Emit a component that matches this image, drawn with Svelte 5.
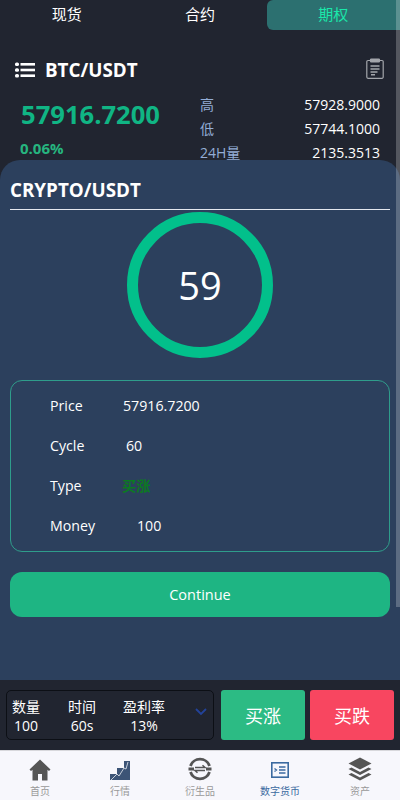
<script>
  const tabs = ['现货', '合约', '期权']
  const stats = [
    ['高', '57928.9000'],
    ['低', '57744.1000'],
    ['24H量', '2135.3513']
  ]
  const orderRows = [
    { label: 'Price', value: '57916.7200', indent: 73 },
    { label: 'Cycle', value: '60', indent: 76 },
    { label: 'Type', value: '买涨', indent: 72, green: true },
    { label: 'Money', value: '100', indent: 87 }
  ]
  const summary = [
    ['数量', '100'],
    ['时间', '60s'],
    ['盈利率', '13%']
  ]
</script>

<div class="page">
  <div class="tabs">
    {#each tabs as tab, i}
      <div class="tab" class:active={i === 2}>{tab}</div>
    {/each}
  </div>

  <div class="pair-row">
    <div class="pair">
      <svg class="list-icon" width="20" height="16" viewBox="0 0 20 16" fill="#fff">
        <rect x="0" y="0.5" width="4" height="3.6" rx="1.6" />
        <rect x="0" y="6.2" width="4" height="3.6" rx="1.6" />
        <rect x="0" y="11.9" width="4" height="3.6" rx="1.6" />
        <rect x="5.5" y="1" width="14.5" height="2.6" />
        <rect x="5.5" y="6.7" width="14.5" height="2.6" />
        <rect x="5.5" y="12.4" width="14.5" height="2.6" />
      </svg>
      <span>BTC/USDT</span>
    </div>
    <svg class="clip-icon" width="18" height="21" viewBox="0 0 18 21" fill="none" stroke="#a3a6ab" stroke-width="1.2">
      <path d="M4.5 2.5H2a1.2 1.2 0 0 0-1.2 1.2v15.4A1.2 1.2 0 0 0 2 20.3h14a1.2 1.2 0 0 0 1.2-1.2V3.7A1.2 1.2 0 0 0 16 2.5h-2.5" />
      <rect x="4.5" y="1" width="9" height="3" rx="0.8" fill="#a3a6ab" />
      <path d="M4.5 8h9M4.5 11h9M4.5 14h7M5 16.8h4" stroke-width="1.4" />
    </svg>
  </div>

  <div class="market">
    <div class="price-col">
      <div class="price">57916.7200</div>
      <div class="change">0.06%</div>
    </div>
    <div class="stats">
      {#each stats as [label, value]}
        <div class="stat"><span class="stat-label">{label}</span><span>{value}</span></div>
      {/each}
    </div>
  </div>

  <div class="sheet">
    <div class="sheet-title">CRYPTO/USDT</div>
    <div class="ring"><span>59</span></div>
    <div class="order-box">
      {#each orderRows as row}
        <div class="order-row">
          <span class="order-label" style="width: {row.indent}px">{row.label}</span>
          <span class:type-green={row.green}>{row.value}</span>
        </div>
      {/each}
    </div>
    <button class="continue">Continue</button>
  </div>

  <div class="trade-bar">
    <div class="summary">
      {#each summary as [label, value]}
        <div class="summary-item"><div>{label}</div><div>{value}</div></div>
      {/each}
      <svg class="chev" width="12" height="8" viewBox="0 0 12 8" fill="none" stroke="#23439a" stroke-width="1.8">
        <path d="M1 1l5 5 5-5" />
      </svg>
    </div>
    <button class="trade up">买涨</button>
    <button class="trade down">买跌</button>
  </div>

  <nav class="bottom-nav">
    <div class="nav-item">
      <svg width="22" height="22" viewBox="0 0 22 22" fill="#555">
        <path d="M11 0.5L0.5 10.5 2 12l1.5-1.2V21.5H9V15h4v6.5h5.500V10.800L20 12l1.500-1.500z" />
      </svg>
      <span>首页</span>
    </div>
    <div class="nav-item">
      <svg width="20" height="21" viewBox="0 0 20 21">
        <path d="M0 20v-6h7V8h7V1h6v19z" fill="#3c5476" />
        <path d="M1 20l6-6 2 2 5-8 2 1 2-7" fill="none" stroke="#e8ecf2" stroke-width="0.8" />
      </svg>
      <span>行情</span>
    </div>
    <div class="nav-item">
      <svg width="24" height="24" viewBox="0 0 24 24" fill="none" stroke="#555">
        <path d="M2.500 9a10 10 0 0 1 19 0M2.500 15a10 10 0 0 0 19 0" stroke-width="2.800" />
        <path d="M0.500 12h5.500M18 12h5.500" stroke-width="2.800" />
        <path d="M7 10.500h10l-2.500-2.200M17 13.500H7l2.500 2.200" stroke-width="1.500" />
      </svg>
      <span>衍生品</span>
    </div>
    <div class="nav-item current">
      <svg width="18" height="16" viewBox="0 0 18 16" fill="none" stroke="#3b6aa0">
        <rect x="0.800" y="0.800" width="16.400" height="14.400" stroke-width="1.600" />
        <path d="M8 5h6.500M8 8h6.500M8 11h6.500M3.500 6.500L5.500 8l-2 1.500" stroke-width="1.300" />
      </svg>
      <span>数字货币</span>
    </div>
    <div class="nav-item">
      <svg width="24" height="24" viewBox="0 0 24 24" fill="#555">
        <path d="M12 0.500L0.500 6.500 12 12.500l11.500-6z" />
        <path d="M0.500 12l3-1.500L12 15l8.500-4.500 3 1.500L12 18z" />
        <path d="M0.500 17.500l3-1.500L12 20.500l8.500-4.500 3 1.500L12 23.500z" />
      </svg>
      <span>资产</span>
    </div>
  </nav>

  <div class="scrollbar"></div>
</div>

<style>
  :global(body) {
    margin: 0;
    background: #212530;
  }

  .page {
    position: relative;
    width: 400px;
    height: 800px;
    overflow: hidden;
    background: #212530;
    color: #fff;
    font-family: 'Open Sans', 'Noto Sans CJK SC', sans-serif;
    display: flex;
    flex-direction: column;
  }

  .tabs {
    display: flex;
    height: 30px;
    flex-shrink: 0;
  }

  .tab {
    flex: 1;
    text-align: center;
    font-size: 15px;
    line-height: 29px;
  }

  .tab.active {
    background: #2c7070;
    color: #1ae8aa;
    border-radius: 6px 0 0 6px;
  }

  .pair-row {
    display: flex;
    align-items: center;
    justify-content: space-between;
    padding: 25px 16px 0 15px;
    height: 30px;
    flex-shrink: 0;
  }

  .clip-icon {
    margin-top: -4px;
  }

  .pair {
    display: flex;
    align-items: center;
    gap: 10px;
    font-size: 18.8px;
    font-weight: 700;
  }

  .market {
    display: flex;
    height: 75px;
    flex-shrink: 0;
    padding-top: 8px;
  }

  .price-col {
    width: 200px;
    padding-left: 20px;
    box-sizing: border-box;
  }

  .price {
    color: #10b584;
    font-size: 25.6px;
    font-weight: 700;
    line-height: 32px;
    margin: 6px 0 0 1px;
  }

  .change {
    color: #26b57f;
    font-size: 15px;
    font-weight: 700;
    line-height: 20px;
    margin-top: 7px;
  }

  .stats {
    width: 180px;
  }

  .stat {
    display: flex;
    justify-content: space-between;
    font-size: 14px;
    line-height: 24px;
  }

  .stat-label {
    color: #93add6;
  }

  .sheet {
    position: absolute;
    left: 0;
    top: 160px;
    width: 400px;
    height: 520px;
    box-sizing: border-box;
    padding: 0 10px;
    background: #2c405d;
    border-radius: 20px 20px 0 0;
    display: flex;
    flex-direction: column;
  }

  .sheet-title {
    height: 49px;
    line-height: 61px;
    font-size: 18.8px;
    font-weight: 700;
    border-bottom: 1px solid #e4e8ee;
    flex-shrink: 0;
  }

  .ring {
    width: 146px;
    height: 146px;
    box-sizing: border-box;
    border: 11px solid #02c08b;
    border-radius: 50%;
    margin: 2px auto 0;
    display: flex;
    align-items: center;
    justify-content: center;
    font-size: 38px;
    flex-shrink: 0;
  }

  .order-box {
    margin-top: 22px;
    height: 172px;
    box-sizing: border-box;
    border: 1px solid #2f9d8b;
    border-radius: 12px;
    padding: 5px 0 0 39px;
    flex-shrink: 0;
  }

  .order-row {
    display: flex;
    height: 40px;
    line-height: 40px;
    font-size: 14.2px;
  }

  .type-green {
    color: #0b7a22;
    font-weight: 700;
  }

  .continue {
    margin-top: 20px;
    height: 45px;
    border: 0;
    border-radius: 12px;
    background: #1eb583;
    color: #fff;
    font: inherit;
    font-size: 14.5px;
    flex-shrink: 0;
  }

  .trade-bar {
    position: absolute;
    left: 0;
    top: 680px;
    width: 400px;
    height: 70px;
    box-sizing: border-box;
    padding: 10px 6px;
    display: flex;
    gap: 7px;
    background: #212530;
  }

  .summary {
    position: relative;
    width: 208px;
    flex-shrink: 0;
    box-sizing: border-box;
    border: 1px solid #0c0f15;
    border-radius: 5px;
    display: flex;
    font-size: 14px;
    line-height: 19px;
    padding-top: 6px;
  }

  .summary-item {
    text-align: center;
    margin-left: 5px;
    width: 28px;
    white-space: nowrap;
  }

  .summary-item:nth-child(2) {
    margin-left: 28px;
  }

  .summary-item:nth-child(3) {
    margin-left: 27px;
    width: 42px;
  }

  .chev {
    position: absolute;
    right: 6px;
    top: 17px;
  }

  .trade {
    border: 0;
    width: 84px;
    flex-shrink: 0;
    height: 50px;
    border-radius: 3px;
    color: #fff;
    font: inherit;
    font-size: 18px;
  }

  .trade.down {
    margin-left: -2px;
  }

  .trade.up {
    background: #2cbb84;
  }

  .trade.down {
    background: #f84660;
  }

  .bottom-nav {
    position: absolute;
    left: 0;
    top: 750px;
    width: 400px;
    height: 50px;
    box-sizing: border-box;
    border-top: 1px solid #d8d8dc;
    background: #f7f7fc;
    display: flex;
  }

  .nav-item {
    flex: 1;
    height: 49px;
    display: flex;
    flex-direction: column;
    align-items: center;
    justify-content: flex-end;
    color: #999;
    font-size: 10px;
    line-height: 14px;
    gap: 3px;
    padding-bottom: 2px;
    box-sizing: border-box;
  }

  .nav-item.current {
    color: #3b6aa0;
  }

  .nav-item.current svg {
    margin-bottom: 3px;
  }

  .scrollbar {
    position: absolute;
    right: 0;
    top: 0;
    width: 4px;
    height: 607px;
    background: rgba(255, 255, 255, 0.23);
  }
</style>
